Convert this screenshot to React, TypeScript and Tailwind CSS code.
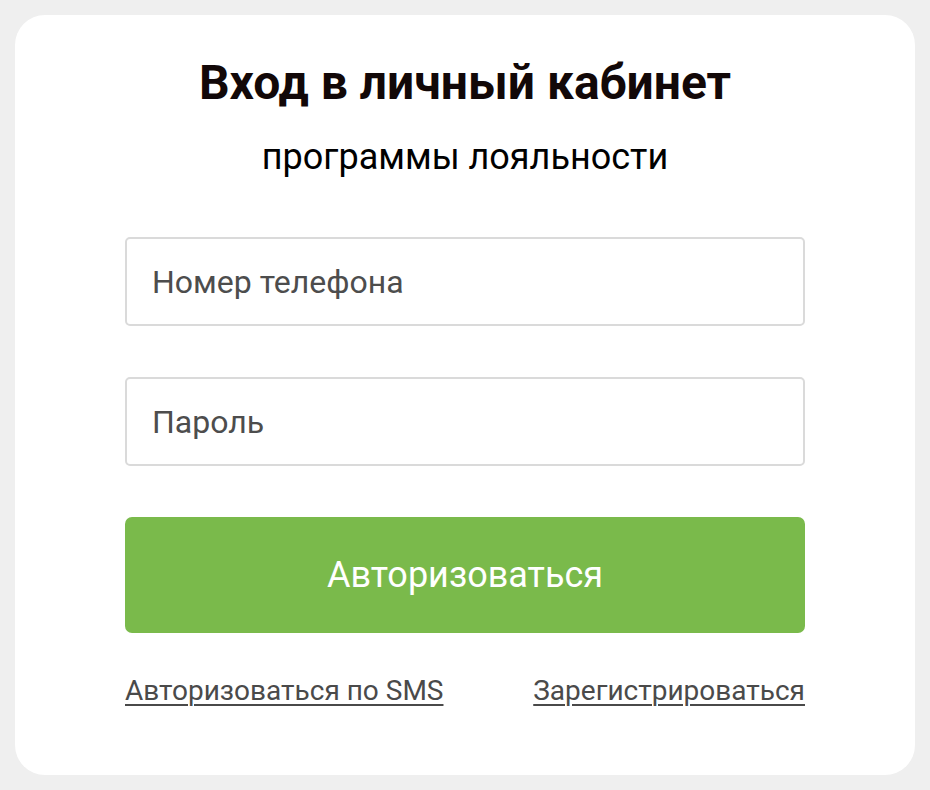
import React from 'react';

export default function App() {
  return (
    <div
      className="min-h-[790px] w-full bg-[#efefef] p-[15px]"
      style={{ fontFamily: 'Roboto, "Noto Sans", sans-serif' }}
    >
      <div className="h-[760px] w-[900px] rounded-[30px] bg-white pt-[40px]">
        <h1 className="text-center text-[48px] font-bold leading-[56px] text-[#120808]">
          Вход в личный кабинет
        </h1>
        <p className="mt-[25px] text-center text-[36px] leading-[42px] text-black">
          программы лояльности
        </p>

        <form className="mx-auto mt-[59px] flex w-[680px] flex-col" onSubmit={(e) => e.preventDefault()}>
          <input
            type="tel"
            placeholder="Номер телефона"
            className="h-[89px] w-full rounded-[5px] border-2 border-[#dadada] px-[25px] text-[32px] text-[#4d4d4d] outline-none placeholder:text-[#4d4d4d]"
          />
          <input
            type="password"
            placeholder="Пароль"
            className="mt-[51px] h-[89px] w-full rounded-[5px] border-2 border-[#dadada] px-[25px] text-[32px] text-[#4d4d4d] outline-none placeholder:text-[#4d4d4d]"
          />
          <button
            type="submit"
            className="mt-[51px] h-[116px] w-full rounded-[7px] bg-[#7aba4b] text-[36px] text-white"
          >
            Авторизоваться
          </button>
          <div className="mt-[41px] flex justify-between text-[28px] leading-[34px] text-[#4a4a4a]">
            <a href="#" className="underline decoration-2 underline-offset-[4px]">
              Авторизоваться по SMS
            </a>
            <a href="#" className="underline decoration-2 underline-offset-[4px]">
              Зарегистрироваться
            </a>
          </div>
        </form>
      </div>
    </div>
  );
}
